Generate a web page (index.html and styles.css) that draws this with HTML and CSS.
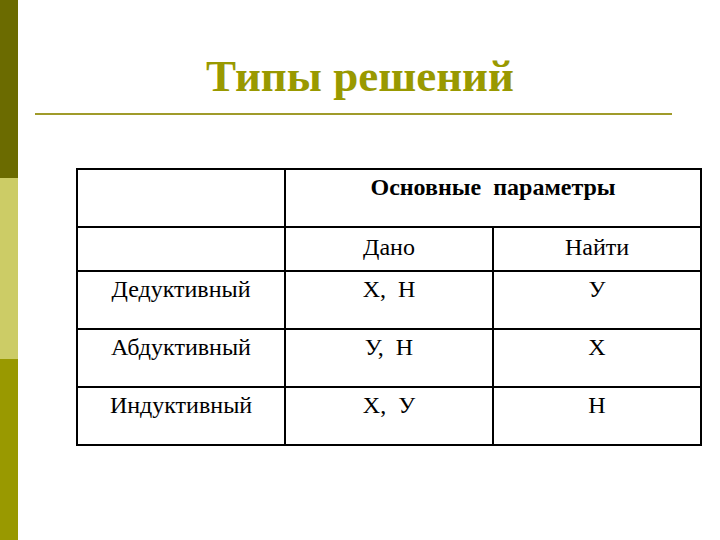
FILE: index.html
```html
<!DOCTYPE html>
<html lang="ru">
<head>
<meta charset="utf-8">
<link rel="stylesheet" href="styles.css">
</head>
<body>
<div class="slide">
  <div class="sidebar">
    <div class="seg seg-dark"></div>
    <div class="seg seg-light"></div>
    <div class="seg seg-mid"></div>
  </div>
  <div class="main">
    <h1 class="title">Типы решений</h1>
    <div class="rule"></div>
    <table class="grid">
      <colgroup>
        <col class="c1"><col class="c2"><col class="c3">
      </colgroup>
      <tr class="r-head">
        <td></td>
        <td colspan="2" class="head">Основные&nbsp; параметры</td>
      </tr>
      <tr class="r-sub">
        <td></td>
        <td>Дано</td>
        <td>Найти</td>
      </tr>
      <tr class="r-data">
        <td>Дедуктивный</td>
        <td>Х,&nbsp; Н</td>
        <td>У</td>
      </tr>
      <tr class="r-data">
        <td>Абдуктивный</td>
        <td>У,&nbsp; Н</td>
        <td>Х</td>
      </tr>
      <tr class="r-data">
        <td>Индуктивный</td>
        <td>Х,&nbsp; У</td>
        <td>Н</td>
      </tr>
    </table>
  </div>
</div>
</body>
</html>
```

FILE: styles.css
```css
html, body {
  margin: 0;
  padding: 0;
  background: #ffffff;
}
.slide {
  display: flex;
  width: 720px;
  height: 540px;
  overflow: hidden;
}
.sidebar {
  width: 18px;
  flex: none;
  display: flex;
  flex-direction: column;
}
.seg-dark { height: 178px; background: #6b6b00; }
.seg-light { height: 181px; background: #cccc66; }
.seg-mid { flex: 1; background: #999900; }
.main {
  flex: 1;
  display: flex;
  flex-direction: column;
}
.title {
  margin: 50px 18px 0 0;
  font-family: "Liberation Serif", "Times New Roman", serif;
  font-weight: bold;
  font-size: 45px;
  line-height: 52px;
  color: #999900;
  text-align: center;
}
.rule {
  margin: 11px 0 0 17px;
  width: 637px;
  height: 2px;
  background: #a09b2a;
}
.grid {
  margin: 53px 0 0 58px;
  width: 624px;
  border-collapse: collapse;
  table-layout: fixed;
  font-family: "Liberation Serif", "Times New Roman", serif;
  font-size: 24px;
  color: #000;
}
.c1 { width: 208px; }
.c2 { width: 208px; }
.c3 { width: 208px; }
.grid td {
  border: 2px solid #000;
  text-align: center;
  vertical-align: top;
  padding: 4px 4px 0;
  line-height: 27px;
}
.r-head { height: 58px; }
.r-sub { height: 44px; }
.r-data { height: 58px; }
.r-sub td { padding-top: 6px; }
.head { font-weight: bold; font-size: 24px; }
```
